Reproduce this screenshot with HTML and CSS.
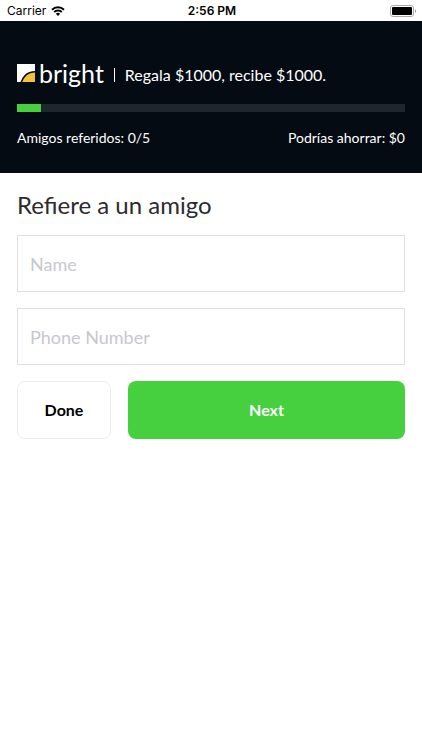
FILE: index.html
```html
<!DOCTYPE html>
<html lang="es">
<head>
<meta charset="utf-8">
<meta name="viewport" content="width=device-width, initial-scale=1">
<title>Refiere a un amigo</title>
<link rel="stylesheet" href="styles.css">
</head>
<body>
<div class="status">
  <div class="carrier">
    <span>Carrier</span>
    <svg class="wifi" viewBox="0 0 14 10" aria-hidden="true">
      <path d="M1 3.7a8.6 8.6 0 0 1 12 0M3.2 6a5.4 5.4 0 0 1 7.6 0" fill="none" stroke="#000" stroke-width="1.9"/>
      <path d="M7 10 4.9 7.8a3 3 0 0 1 4.2 0Z"/>
    </svg>
  </div>
  <time class="clock">2:56 PM</time>
  <svg class="battery" viewBox="0 0 27 12" aria-hidden="true">
    <rect x=".5" y=".5" width="23" height="11" rx="2.5" fill="#fff" stroke="#aaa"/>
    <rect x="2" y="2" width="20" height="8" rx="1"/>
    <path d="M25 4.2c1.6.6 1.6 3 0 3.6Z" fill="#999"/>
  </svg>
</div>
<header class="banner">
  <div class="brand">
    <div class="logo">
      <svg class="mark" viewBox="0 0 18 18" aria-hidden="true">
        <path fill="#fff" d="M0 0h18v7C11 7 6.500 10.500 4 17L3.500 18H0Z"/>
        <path fill="#f3c13a" d="M18 8.500V18H5.200C7.500 12 11.500 8.800 18 8.500Z"/>
      </svg>
      <span class="wordmark">bright</span>
    </div>
    <span class="divider"></span>
    <span class="tagline">Regala $1000, recibe $1000.</span>
  </div>
  <div class="track"><div class="fill"></div></div>
  <div class="stats"><span>Amigos referidos: 0/5</span><span>Podrías ahorrar: $0</span></div>
</header>
<main>
  <h1>Refiere a un amigo</h1>
  <form class="form">
    <input type="text" aria-label="Name" placeholder="Name">
    <input type="tel" aria-label="Phone Number" placeholder="Phone Number">
    <div class="actions">
      <button type="button" class="done">Done</button>
      <button type="button" class="next">Next</button>
    </div>
  </form>
</main>
</body>
</html>
```
FILE: styles.css
```css
* { box-sizing: border-box; }

body {
  margin: 0;
  background: #fff;
  color: #2b2b2d;
  font-family: Lato, sans-serif;
}

.status {
  display: grid;
  grid-template-columns: 1fr auto 1fr;
  align-items: center;
  height: 21px;
  padding: 0 5px 0 7px;
  color: #000;
  font: 12px/20px Inter, sans-serif;
}

.carrier {
  display: flex;
  align-items: center;
  gap: 5px;
}

.wifi {
  width: 14px;
  height: 10px;
}

.clock { font-weight: 600; }

.battery {
  justify-self: end;
  width: 27px;
  height: 12px;
}

.banner {
  padding: 40px 17px 24px;
  background: #040b13;
  color: #fff;
}

.brand {
  display: flex;
  align-items: center;
  height: 28px;
}

.logo {
  display: flex;
  align-items: center;
  gap: 4px;
  padding-bottom: 4px;
}

.mark {
  width: 18px;
  height: 18px;
}

.wordmark {
  font-size: 25px;
  line-height: 28px;
}

.divider {
  width: 1px;
  height: 14px;
  margin: 0 10px;
  background: #fff;
}

.tagline {
  font-size: 16px;
  line-height: 28px;
}

.track {
  height: 8px;
  margin: 15px 0;
  background: #20262d;
}

.fill {
  width: 24px;
  height: 100%;
  background: #46d040;
}

.stats {
  display: flex;
  justify-content: space-between;
  font-size: 14px;
  line-height: 22px;
}

main { padding: 16px 17px; }

h1 {
  margin: 0 0 14px;
  font-size: 24px;
  font-weight: 400;
  line-height: 32px;
}

.form {
  display: grid;
  gap: 16px;
}

input {
  width: 100%;
  height: 57px;
  padding: 0 12px;
  border: 1px solid #dfdfe1;
  border-radius: 0;
  background: #fff;
  color: #2b2b2d;
  font: 18px/24px Lato, sans-serif;
}

input::placeholder {
  color: #c7c7cc;
  opacity: 1;
}

.actions {
  display: grid;
  grid-template-columns: 94px 1fr;
  gap: 17px;
}

button {
  height: 58px;
  padding: 0;
  border: 0;
  border-radius: 8px;
  font: bold 16px/20px Lato, sans-serif;
}

.done {
  border: 1px solid #ececee;
  background: #fff;
  color: #000;
}

.next {
  background: #46d040;
  color: #fff;
}
```
